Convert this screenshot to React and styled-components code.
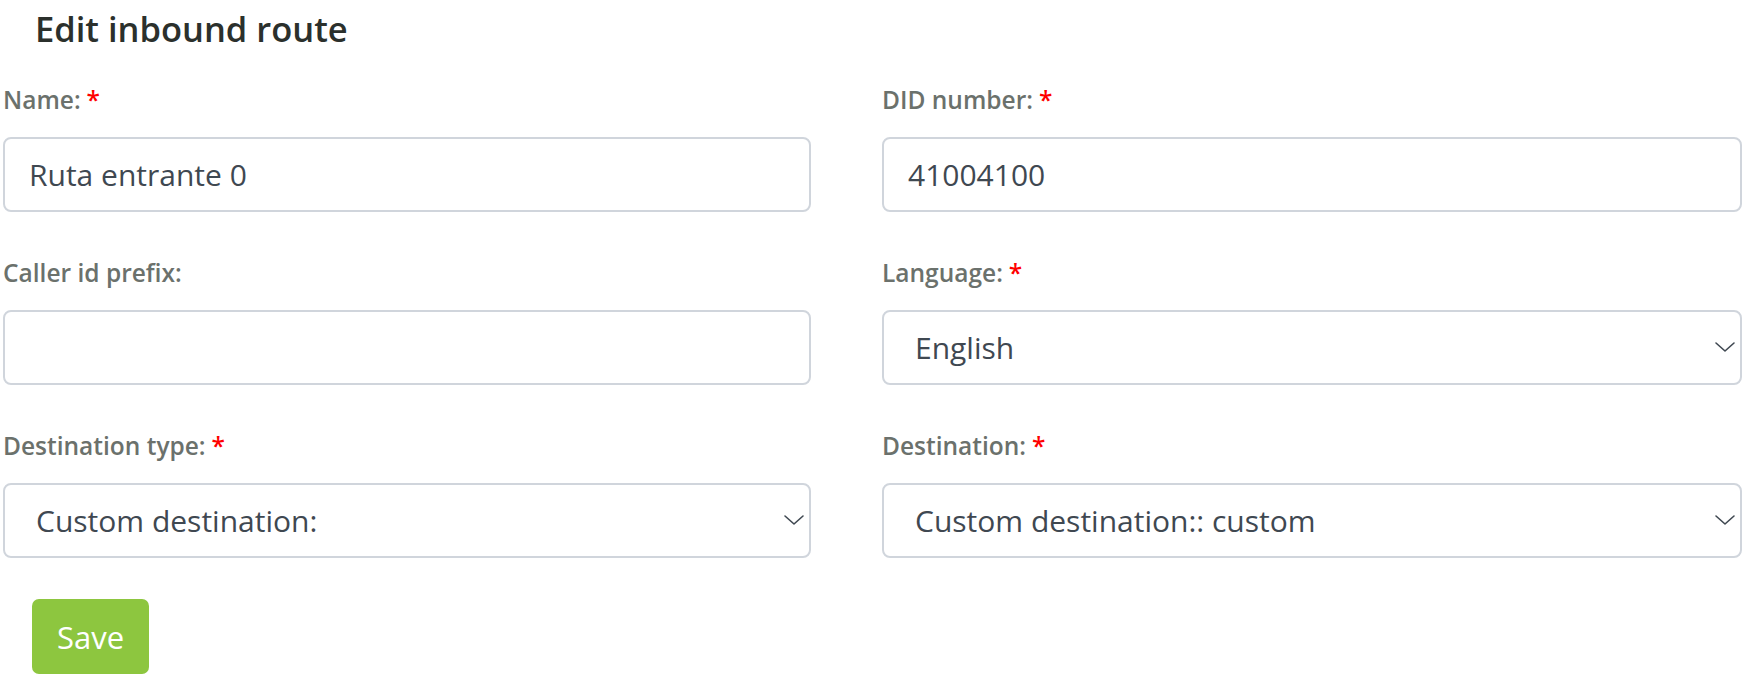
import React, { useState } from 'react';
import styled, { createGlobalStyle } from 'styled-components';

const GlobalStyle = createGlobalStyle`
  body {
    margin: 0;
    background: #fff;
    font-family: "Open Sans", "Noto Sans", sans-serif;
  }
`;

const Page = styled.div`
  padding: 0 4px 0 3px;
`;

const Title = styled.h2`
  box-sizing: border-box;
  margin: 0;
  padding: 7px 0 0 32px;
  height: 62px;
  font-size: 34.5px;
  font-weight: 600;
  color: #2b302c;
  line-height: 44px;
`;

const Form = styled.form`
  display: grid;
  grid-template-columns: 808px 860px;
  column-gap: 71px;
  row-gap: 23px;
`;

const Field = styled.div`
  display: flex;
  flex-direction: column;
`;

const Label = styled.label`
  display: block;
  height: 75px;
  padding-top: 22px;
  box-sizing: border-box;
  font-size: 24.5px;
  font-weight: 600;
  color: #6b716c;
  line-height: 32px;

  span {
    color: #ff0000;
    margin-left: 6px;
  }
`;

const Input = styled.input`
  box-sizing: border-box;
  width: 100%;
  height: 75px;
  padding: 0 24px;
  border: 2px solid #d0d5dc;
  border-radius: 8px;
  font-family: inherit;
  font-size: 30px;
  color: #3f4851;
  outline: none;
`;

const SelectWrap = styled.div`
  position: relative;

  svg {
    position: absolute;
    right: 6px;
    top: 31px;
    pointer-events: none;
  }
`;

const Select = styled.select`
  box-sizing: border-box;
  appearance: none;
  width: 100%;
  height: 75px;
  padding: 0 40px 0 31px;
  border: 2px solid #d0d5dc;
  border-radius: 8px;
  background: #fff;
  font-family: inherit;
  font-size: 30px;
  color: #3f4851;
  outline: none;
`;

const Actions = styled.div`
  grid-column: 1 / -1;
  padding: 18px 0 0 29px;
`;

const SaveButton = styled.button`
  width: 117px;
  height: 75px;
  border: none;
  border-radius: 7px;
  background: #8dc63f;
  color: #fff;
  font-family: inherit;
  font-size: 31px;
  font-weight: 500;
  cursor: pointer;
`;

const Chevron = () => (
  <svg width="22" height="12" viewBox="0 0 22 12" fill="none">
    <path d="M2 2l9 8 9-8" stroke="#3f4851" strokeWidth="1.6" strokeLinecap="round" strokeLinejoin="round" />
  </svg>
);

const DropDown = ({ value, options }) => (
  <SelectWrap>
    <Select defaultValue={value}>
      {options.map((o) => (
        <option key={o}>{o}</option>
      ))}
    </Select>
    <Chevron />
  </SelectWrap>
);

const App = () => {
  const [data, setData] = useState({
    name: 'Ruta entrante 0',
    did: '41004100',
    prefix: '',
  });

  const handleChange = ({ currentTarget: input }) => {
    setData({ ...data, [input.name]: input.value });
  };

  return (
    <Page>
      <GlobalStyle />
      <Title>Edit inbound route</Title>
      <Form onSubmit={(e) => e.preventDefault()}>
        <Field>
          <Label>Name:<span>*</span></Label>
          <Input name="name" value={data.name} onChange={handleChange} />
        </Field>
        <Field>
          <Label>DID number:<span>*</span></Label>
          <Input name="did" value={data.did} onChange={handleChange} />
        </Field>
        <Field>
          <Label>Caller id prefix:</Label>
          <Input name="prefix" value={data.prefix} onChange={handleChange} />
        </Field>
        <Field>
          <Label>Language:<span>*</span></Label>
          <DropDown value="English" options={['English', 'Español']} />
        </Field>
        <Field>
          <Label>Destination type:<span>*</span></Label>
          <DropDown value="Custom destination:" options={['Custom destination:']} />
        </Field>
        <Field>
          <Label>Destination:<span>*</span></Label>
          <DropDown value="Custom destination:: custom" options={['Custom destination:: custom']} />
        </Field>
        <Actions>
          <SaveButton type="submit">Save</SaveButton>
        </Actions>
      </Form>
    </Page>
  );
};

export default App;
